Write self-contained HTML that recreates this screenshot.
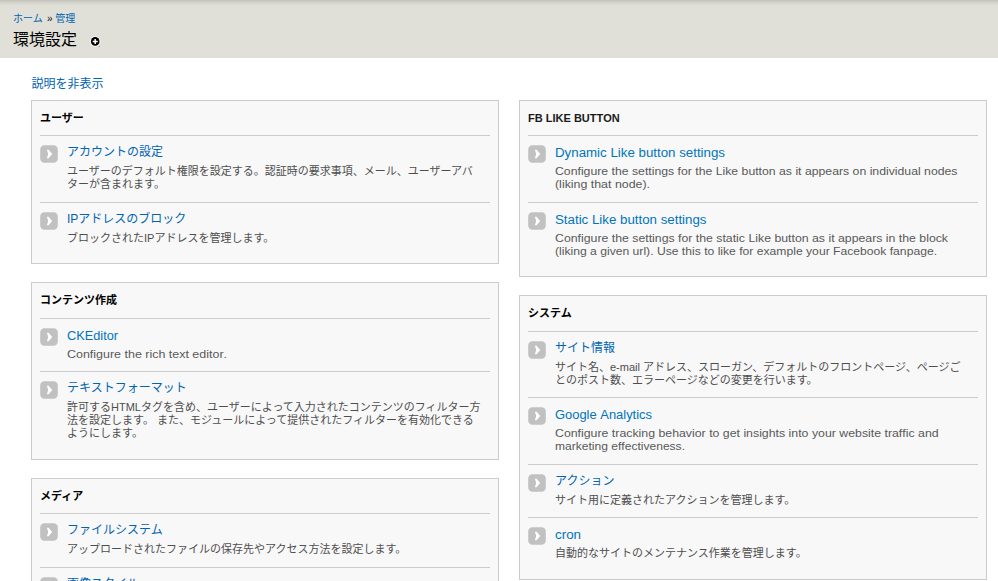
<!DOCTYPE html>
<html lang="ja"><head><meta charset="utf-8"><title>環境設定</title><style>
html,body{margin:0;padding:0}
html{overflow:hidden}
body{width:998px;height:581px;overflow:hidden;background:#fff}
#page{position:relative;width:998px;height:581px;overflow:hidden;background:#fff;font-family:"Liberation Sans","Noto Sans CJK JP",sans-serif}
#hdr{position:absolute;left:0;top:0;width:998px;height:58px;background:linear-gradient(to bottom,#c4c4bd 0,#cbcbc4 1.5px,#d3d3cb 2.5px,#d8d8d0 3.5px,#dbdbd3 4.5px,#dedfd6 5.5px,#e0e0d8 7px,#e0e0d8 100%)}
.box{position:absolute;box-sizing:border-box;background:#f8f8f8;border:1px solid #ccc}
.sep{position:absolute;width:450px;height:1px;background:#ccc}
.ic,.plus{position:absolute}
.j{position:absolute;overflow:visible;display:block;margin:0;padding:0;text-decoration:none;font-weight:normal}
.j span{position:absolute;left:0;top:0;white-space:nowrap;line-height:1.3;font-family:"Liberation Sans","Noto Sans CJK JP",sans-serif}
.j span.k{color:#0064b2}
.j span.d{color:#4e4e4e}
.j span.h{color:#000;font-weight:bold}
.l{position:absolute;display:block;margin:0;padding:0;text-decoration:none;font-weight:normal;white-space:nowrap;line-height:16px;transform-origin:0 0;font-kerning:none}
</style></head><body>
<div id="page">
<div id="hdr"></div>
<a href="#" class="j" style="left:13px;top:12px;width:32px;height:13px"><span class="k" style="font-size:10px">ホーム</span></a>
<div class="j" style="left:47.0px;top:12px;width:7px;height:13px"><span style="font-size:10px;color:#111">»</span></div>
<a href="#" class="j" style="left:55.2px;top:12px;width:22px;height:13px"><span class="k" style="font-size:10px">管理</span></a>
<h1 class="j" style="left:13px;top:30px;width:66px;height:19px"><span style="font-size:16px;color:#000">環境設定</span></h1>
<svg class="plus" style="left:88px;top:34px" width="14" height="14" viewBox="0 0 14 14"><circle cx="7.2" cy="7.4" r="5.4" fill="#f4f4ee"/><circle cx="7.2" cy="7.4" r="4.3" fill="#000"/><path d="M4.7 7.4h5M7.2 4.9v5" stroke="#fff" stroke-width="1.5" fill="none"/><rect x="10.4" y="12.1" width="1.6" height="0.7" fill="#8c8c86"/></svg>
<a href="#" class="j" style="left:31.4px;top:77px;width:74px;height:15px"><span class="k" style="font-size:12px">説明を非表示</span></a>
<div class="box" style="left:31px;top:100px;width:468px;height:164px"></div>
<h3 class="j" style="left:40px;top:111px;width:46px;height:14px"><span class="h" style="font-size:11px">ユーザー</span></h3>
<div class="sep" style="left:40px;top:135px"></div>
<svg class="ic" style="left:40px;top:145px" width="18" height="18" viewBox="0 0 18 18"><rect x="0.2" y="0.2" width="17.6" height="17.6" rx="4.2" fill="#c1c1c1"/><path d="M6.9 4.8L8.6 4.8L12.2 9L8.6 13.2L6.9 13.2L8.2 9Z" fill="#fff"/></svg>
<a href="#" class="j" style="left:67px;top:145px;width:98px;height:15px"><span class="k" style="font-size:12px">アカウントの設定</span></a>
<div class="j" style="left:67px;top:164px;width:409px;height:14px"><span class="d" style="font-size:11px">ユーザーのデフォルト権限を設定する。認証時の要求事項、メール、ユーザーアバ</span></div>
<div class="j" style="left:67px;top:177px;width:101px;height:14px"><span class="d" style="font-size:11px">ターが含まれます。</span></div>
<div class="sep" style="left:40px;top:202px"></div>
<svg class="ic" style="left:40px;top:212px" width="18" height="18" viewBox="0 0 18 18"><rect x="0.2" y="0.2" width="17.6" height="17.6" rx="4.2" fill="#c1c1c1"/><path d="M6.9 4.8L8.6 4.8L12.2 9L8.6 13.2L6.9 13.2L8.2 9Z" fill="#fff"/></svg>
<a href="#" class="j" style="left:67px;top:212px;width:119px;height:15px"><span class="k" style="font-size:12px">IPアドレスのブロック</span></a>
<div class="j" style="left:67px;top:231px;width:208px;height:14px"><span class="d" style="font-size:11px">ブロックされたIPアドレスを管理します。</span></div>
<div class="box" style="left:31px;top:282px;width:468px;height:178px"></div>
<h3 class="j" style="left:40px;top:293px;width:79px;height:14px"><span class="h" style="font-size:11px">コンテンツ作成</span></h3>
<div class="sep" style="left:40px;top:318px"></div>
<svg class="ic" style="left:40px;top:328px" width="18" height="18" viewBox="0 0 18 18"><rect x="0.2" y="0.2" width="17.6" height="17.6" rx="4.2" fill="#c1c1c1"/><path d="M6.9 4.8L8.6 4.8L12.2 9L8.6 13.2L6.9 13.2L8.2 9Z" fill="#fff"/></svg>
<a href="#" class="l" style="left:67px;top:327.84px;font-size:12px;color:#0074bd;transform:scaleX(1.0621)">CKEditor</a>
<div class="l" style="left:67px;top:346.19px;font-size:11px;color:#595959;transform:scaleX(1.1328)">Configure the rich text editor.</div>
<div class="sep" style="left:40px;top:371px"></div>
<svg class="ic" style="left:40px;top:381px" width="18" height="18" viewBox="0 0 18 18"><rect x="0.2" y="0.2" width="17.6" height="17.6" rx="4.2" fill="#c1c1c1"/><path d="M6.9 4.8L8.6 4.8L12.2 9L8.6 13.2L6.9 13.2L8.2 9Z" fill="#fff"/></svg>
<a href="#" class="j" style="left:67px;top:381px;width:122px;height:15px"><span class="k" style="font-size:12px">テキストフォーマット</span></a>
<div class="j" style="left:67px;top:400px;width:417px;height:14px"><span class="d" style="font-size:11px">許可するHTMLタグを含め、ユーザーによって入力されたコンテンツのフィルター方</span></div>
<div class="j" style="left:67px;top:413px;width:413px;height:14px"><span class="d" style="font-size:11px">法を設定します。 また、モジュールによって提供されたフィルターを有効化できる</span></div>
<div class="j" style="left:67px;top:426px;width:79px;height:14px"><span class="d" style="font-size:11px">ようにします。</span></div>
<div class="box" style="left:31px;top:478px;width:468px;height:163px"></div>
<h3 class="j" style="left:40px;top:489px;width:46px;height:14px"><span class="h" style="font-size:11px">メディア</span></h3>
<div class="sep" style="left:40px;top:513px"></div>
<svg class="ic" style="left:40px;top:523px" width="18" height="18" viewBox="0 0 18 18"><rect x="0.2" y="0.2" width="17.6" height="17.6" rx="4.2" fill="#c1c1c1"/><path d="M6.9 4.8L8.6 4.8L12.2 9L8.6 13.2L6.9 13.2L8.2 9Z" fill="#fff"/></svg>
<a href="#" class="j" style="left:67px;top:523px;width:98px;height:15px"><span class="k" style="font-size:12px">ファイルシステム</span></a>
<div class="j" style="left:67px;top:542px;width:343px;height:14px"><span class="d" style="font-size:11px">アップロードされたファイルの保存先やアクセス方法を設定します。</span></div>
<div class="sep" style="left:40px;top:567px"></div>
<svg class="ic" style="left:40px;top:577px" width="18" height="18" viewBox="0 0 18 18"><rect x="0.2" y="0.2" width="17.6" height="17.6" rx="4.2" fill="#c1c1c1"/><path d="M6.9 4.8L8.6 4.8L12.2 9L8.6 13.2L6.9 13.2L8.2 9Z" fill="#fff"/></svg>
<a href="#" class="j" style="left:67px;top:577px;width:74px;height:15px"><span class="k" style="font-size:12px">画像スタイル</span></a>
<div class="box" style="left:519px;top:100px;width:468px;height:177px"></div>
<h3 class="l" style="left:527.6px;top:110.19px;font-size:11px;color:#1a1a1a;font-weight:bold;transform:scaleX(1.0016)">FB LIKE BUTTON</h3>
<div class="sep" style="left:528px;top:135px"></div>
<svg class="ic" style="left:528px;top:145px" width="18" height="18" viewBox="0 0 18 18"><rect x="0.2" y="0.2" width="17.6" height="17.6" rx="4.2" fill="#c1c1c1"/><path d="M6.9 4.8L8.6 4.8L12.2 9L8.6 13.2L6.9 13.2L8.2 9Z" fill="#fff"/></svg>
<a href="#" class="l" style="left:555px;top:144.84px;font-size:12px;color:#0074bd;transform:scaleX(1.1081)">Dynamic Like button settings</a>
<div class="l" style="left:555px;top:163.19px;font-size:11px;color:#595959;transform:scaleX(1.1137)">Configure the settings for the Like button as it appears on individual nodes</div>
<div class="l" style="left:555px;top:176.19px;font-size:11px;color:#595959;transform:scaleX(1.1259)">(liking that node).</div>
<div class="sep" style="left:528px;top:202px"></div>
<svg class="ic" style="left:528px;top:212px" width="18" height="18" viewBox="0 0 18 18"><rect x="0.2" y="0.2" width="17.6" height="17.6" rx="4.2" fill="#c1c1c1"/><path d="M6.9 4.8L8.6 4.8L12.2 9L8.6 13.2L6.9 13.2L8.2 9Z" fill="#fff"/></svg>
<a href="#" class="l" style="left:555px;top:211.84px;font-size:12px;color:#0074bd;transform:scaleX(1.1079)">Static Like button settings</a>
<div class="l" style="left:555px;top:230.19px;font-size:11px;color:#595959;transform:scaleX(1.1178)">Configure the settings for the static Like button as it appears in the block</div>
<div class="l" style="left:555px;top:243.19px;font-size:11px;color:#595959;transform:scaleX(1.1039)">(liking a given url). Use this to like for example your Facebook fanpage.</div>
<div class="box" style="left:519px;top:295px;width:468px;height:285px"></div>
<h3 class="j" style="left:528px;top:306px;width:46px;height:14px"><span class="h" style="font-size:11px">システム</span></h3>
<div class="sep" style="left:528px;top:331px"></div>
<svg class="ic" style="left:528px;top:341px" width="18" height="18" viewBox="0 0 18 18"><rect x="0.2" y="0.2" width="17.6" height="17.6" rx="4.2" fill="#c1c1c1"/><path d="M6.9 4.8L8.6 4.8L12.2 9L8.6 13.2L6.9 13.2L8.2 9Z" fill="#fff"/></svg>
<a href="#" class="j" style="left:555px;top:341px;width:62px;height:15px"><span class="k" style="font-size:12px">サイト情報</span></a>
<div class="j" style="left:555px;top:360px;width:415px;height:14px"><span class="d" style="font-size:11px">サイト名、e-mail アドレス、スローガン、デフォルトのフロントページ、ページご</span></div>
<div class="j" style="left:555px;top:373px;width:266px;height:14px"><span class="d" style="font-size:11px">とのポスト数、エラーページなどの変更を行います。</span></div>
<div class="sep" style="left:528px;top:397px"></div>
<svg class="ic" style="left:528px;top:407px" width="18" height="18" viewBox="0 0 18 18"><rect x="0.2" y="0.2" width="17.6" height="17.6" rx="4.2" fill="#c1c1c1"/><path d="M6.9 4.8L8.6 4.8L12.2 9L8.6 13.2L6.9 13.2L8.2 9Z" fill="#fff"/></svg>
<a href="#" class="l" style="left:555px;top:406.84px;font-size:12px;color:#0074bd;transform:scaleX(1.0772)">Google Analytics</a>
<div class="l" style="left:555px;top:425.19px;font-size:11px;color:#595959;transform:scaleX(1.1203)">Configure tracking behavior to get insights into your website traffic and</div>
<div class="l" style="left:555px;top:438.19px;font-size:11px;color:#595959;transform:scaleX(1.0960)">marketing effectiveness.</div>
<div class="sep" style="left:528px;top:464px"></div>
<svg class="ic" style="left:528px;top:474px" width="18" height="18" viewBox="0 0 18 18"><rect x="0.2" y="0.2" width="17.6" height="17.6" rx="4.2" fill="#c1c1c1"/><path d="M6.9 4.8L8.6 4.8L12.2 9L8.6 13.2L6.9 13.2L8.2 9Z" fill="#fff"/></svg>
<a href="#" class="j" style="left:555px;top:474px;width:62px;height:15px"><span class="k" style="font-size:12px">アクション</span></a>
<div class="j" style="left:555px;top:493px;width:244px;height:14px"><span class="d" style="font-size:11px">サイト用に定義されたアクションを管理します。</span></div>
<div class="sep" style="left:528px;top:517px"></div>
<svg class="ic" style="left:528px;top:527px" width="18" height="18" viewBox="0 0 18 18"><rect x="0.2" y="0.2" width="17.6" height="17.6" rx="4.2" fill="#c1c1c1"/><path d="M6.9 4.8L8.6 4.8L12.2 9L8.6 13.2L6.9 13.2L8.2 9Z" fill="#fff"/></svg>
<a href="#" class="l" style="left:555px;top:526.84px;font-size:12px;color:#0074bd;transform:scaleX(1.1138)">cron</a>
<div class="j" style="left:555px;top:546px;width:254px;height:14px"><span class="d" style="font-size:11px">自動的なサイトのメンテナンス作業を管理します。</span></div>
</div>
</body></html>
